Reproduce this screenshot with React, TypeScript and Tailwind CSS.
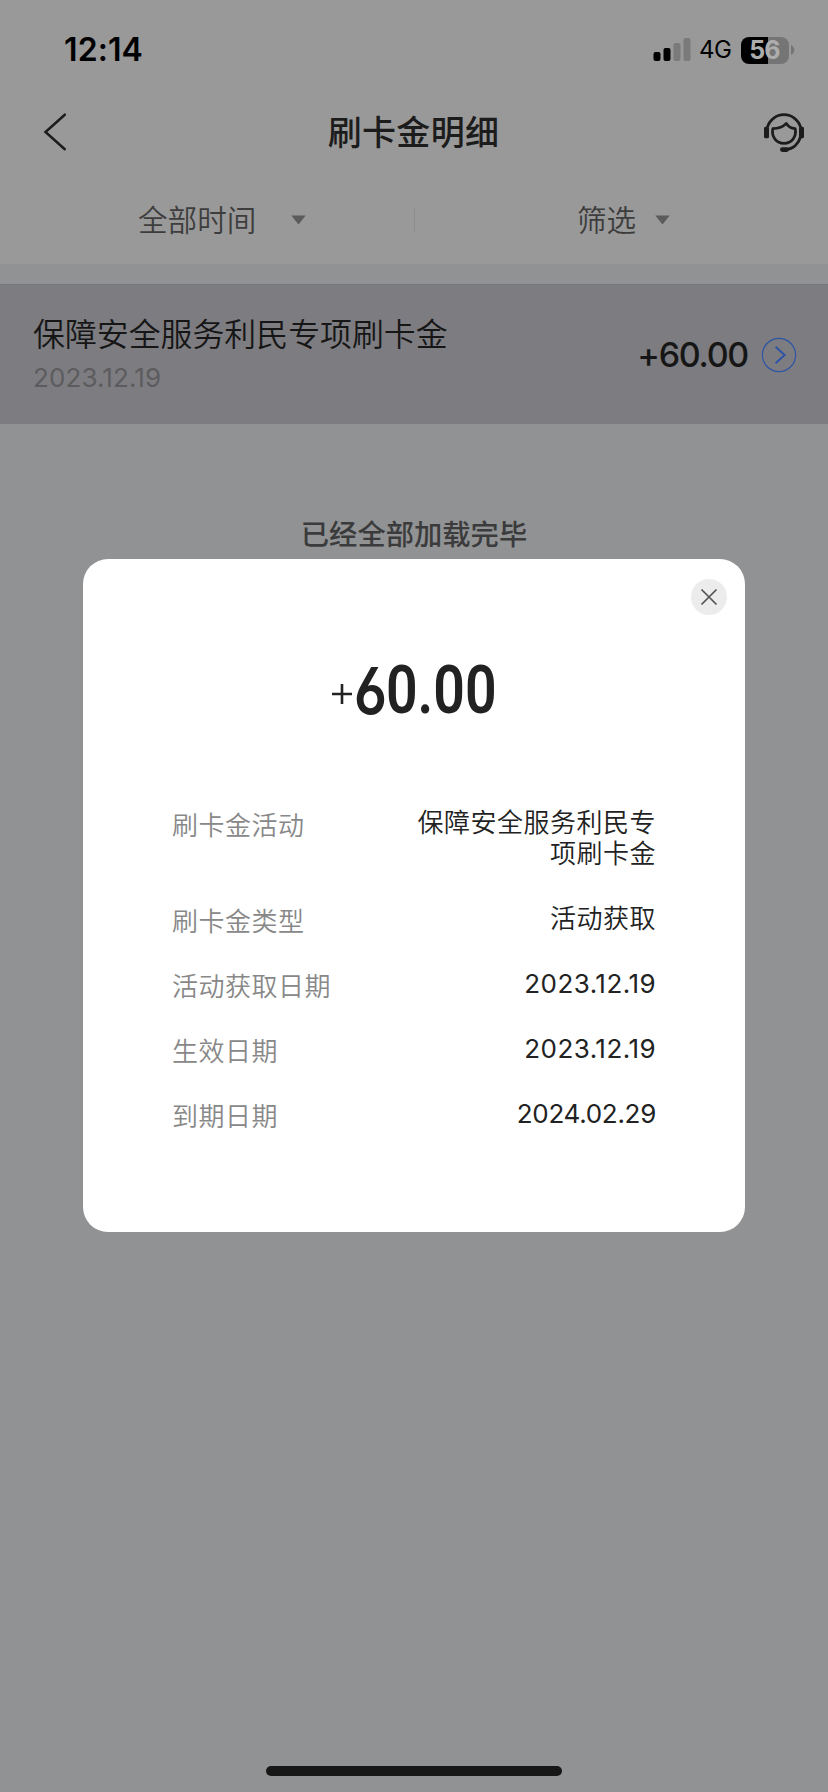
import React from "react";

type Detail = { label: string; value: string; tone: string };

const details: Detail[] = [
  { label: "刷卡金活动", value: "保障安全服务利民专项刷卡金", tone: "font-[350] tracking-[0.5px]" },
  { label: "刷卡金类型", value: "活动获取", tone: "font-[350] tracking-[0.5px]" },
  { label: "活动获取日期", value: "2023.12.19", tone: "font-[380] tracking-[0.45px]" },
  { label: "生效日期", value: "2023.12.19", tone: "font-[380] tracking-[0.45px]" },
  { label: "到期日期", value: "2024.02.29", tone: "font-[380] tracking-[-0.3px]" },
];

function StatusBar() {
  return (
    <div className="flex h-[92px] items-start justify-between pl-[64px] pr-[33px] pt-[30px]">
      <span className="h-[40px] text-[32px] font-semibold leading-[40px] tracking-[0.1px] text-black">12:14</span>
      <div className="flex h-[40px] items-center">
        <svg width="38" height="40" viewBox="0 0 38 40">
          <rect x="0.5" y="22" width="7" height="9" rx="2" fill="#000" />
          <rect x="10.5" y="18" width="7" height="13" rx="2" fill="#000" />
          <rect x="20.5" y="13" width="7" height="18" rx="2" fill="#7a7a7a" />
          <rect x="30.5" y="8" width="7" height="23" rx="2" fill="#7a7a7a" />
        </svg>
        <span className="ml-[8px] w-[33px] text-[24px] leading-[40px] tracking-[-0.5px] text-black">4G</span>
        <div className="ml-[9px] flex h-[27px] w-[48px] items-center justify-center rounded-[8px] bg-linear-to-r from-black from-[56%] to-[#757575] to-[56%]">
          <span className="h-[32px] pr-[1px] text-[25px] font-bold leading-[32px] tracking-[-0.8px] text-[#adadad]">56</span>
        </div>
        <svg className="ml-[2px]" width="4" height="10" viewBox="0 0 4 10">
          <path d="M0 0C2 1 3.3 3 3.3 5S2 9 0 10Z" fill="#757575" />
        </svg>
      </div>
    </div>
  );
}

function HeadsetIcon() {
  return (
    <svg width="44" height="44" viewBox="0 0 44 44" fill="none" stroke="#1c1c1c" strokeWidth="2.8">
      <path d="M5.3 17.5A17.3 17.3 0 0 1 38.7 17.5" />
      <path d="M38.7 26.5C36.5 34 31 39 24 39.3" />
      <rect x="2" y="16.8" width="5" height="11.4" rx="1.5" fill="#1c1c1c" stroke="none" />
      <rect x="37" y="16.8" width="5" height="11.4" rx="1.5" fill="#1c1c1c" stroke="none" />
      <rect x="18" y="37.2" width="9" height="4.8" rx="2.4" fill="#1c1c1c" stroke="none" />
      <path d="M10.8 18.6C16 18.6 21 17 24.3 13.4C26 16.6 28.8 18.4 33.2 18.6C34.8 27 29.6 33.4 22 33.4S9.2 27 10.8 18.6Z" strokeLinejoin="round" strokeWidth="2.7" />
    </svg>
  );
}

function Header() {
  return (
    <header className="flex h-[80px] items-center justify-between pl-[42px] pr-[22px]">
      <svg width="44" height="44" viewBox="0 0 44 44" fill="none" stroke="#1c1c1c" strokeWidth="2.5" strokeLinecap="round">
        <path d="M22.8 4.7L3.5 22L22.8 39.2" />
      </svg>
      <h1 className="ml-[-21px] pt-[2px] text-[34px] font-medium leading-[44px] tracking-[0.3px] text-[#1c1c1c]">刷卡金明细</h1>
      <HeadsetIcon />
    </header>
  );
}

function Triangle() {
  return (
    <svg width="15" height="10" viewBox="0 0 15 10">
      <path d="M0.3 0.5H14.7L7.5 9.5Z" fill="#5b5b5b" />
    </svg>
  );
}

function Filters() {
  return (
    <div className="flex h-[92px] items-center pt-[3px] text-[29.6px] font-[350] leading-[40px] text-[#3d3d3d]">
      <div className="flex w-[414px] items-center pl-[138px]">
        <span className="w-[153px] pt-px">全部时间</span>
        <Triangle />
      </div>
      <div className="h-[24px] w-px bg-[#8b8b8b]" />
      <div className="flex items-center pl-[162px]">
        <span className="w-[78px] pt-px">筛选</span>
        <Triangle />
      </div>
    </div>
  );
}

function Entry() {
  return (
    <div className="flex h-[140px] items-center justify-between border-t border-[#767679] bg-[#7d7c80] pl-[33px] pr-[31px]">
      <div>
        <div className="text-[31.9px] font-[350] leading-[46px] text-[#161616]">保障安全服务利民专项刷卡金</div>
        <div className="text-[26px] leading-[40px] tracking-[0.1px] text-[#5c5c5e]">2023.12.19</div>
      </div>
      <div className="flex items-center">
        <span className="text-[34px] font-medium leading-[40px] tracking-[-1.3px] text-[#161616]">+60.00</span>
        <svg className="ml-[13px]" width="36" height="36" viewBox="0 0 36 36" fill="none" stroke="#2d54a6">
          <circle cx="18" cy="18" r="16.6" strokeWidth="1.2" />
          <path d="M14.6 9.8L23.6 18L14.6 26.2" strokeWidth="2" />
        </svg>
      </div>
    </div>
  );
}

function DetailDialog() {
  return (
    <div role="dialog" className="absolute left-[83px] top-[559px] flex h-[673px] w-[662px] flex-col rounded-[25px] bg-white pl-[89px] pr-[89px]">
      <button className="absolute right-[18px] top-[20px] flex h-[36px] w-[36px] items-center justify-center rounded-full bg-[#ececec]">
        <svg width="18" height="18" viewBox="0 0 18 18" stroke="#555" strokeWidth="1.7">
          <path d="M1.5 1.5L16.5 16.5M16.5 1.5L1.5 16.5" />
        </svg>
      </button>
      <div className="mt-[92px] flex h-[80px] items-center pl-[159px] text-[#222]">
        <svg width="22" height="22" viewBox="0 0 22 22" className="mt-[6px]" stroke="#222" strokeWidth="2.6">
          <path d="M1 11H21M11 1V21" />
        </svg>
        <span className="ml-[1px] flex origin-left scale-x-[0.84] leading-[80px]">
          <span className="w-[38px] text-[65px] font-semibold [font-feature-settings:'ss01','cv03']">6</span>
          <span className="text-[66px] font-semibold [font-family:Roboto]">0.00</span>
        </span>
      </div>
      <dl className="mt-[76px] flex flex-col gap-[34px] text-[26px] leading-[31px]">
        {details.map((d) => (
          <div key={d.label} className="flex justify-between">
            <dt className="h-[31px] whitespace-nowrap pt-[3px] font-[350] tracking-[0.5px] text-[#888]">{d.label}</dt>
            <dd className={`w-[243px] text-right text-[#222] ${d.tone}`}>{d.value}</dd>
          </div>
        ))}
      </dl>
    </div>
  );
}

export default function App() {
  return (
    <div className="relative flex h-[1792px] w-[828px] flex-col overflow-hidden bg-[#919294] [font-family:Inter,'Noto_Sans_CJK_SC',sans-serif]">
      <div className="bg-[#999]">
        <StatusBar />
        <Header />
        <Filters />
      </div>
      <main className="flex flex-1 flex-col pt-[20px]">
        <Entry />
        <p className="mt-[91px] text-center text-[28.3px] font-medium leading-[40px] text-[#3b3b3c]">已经全部加载完毕</p>
      </main>
      <div className="mb-[16px] h-[10px] w-[296px] self-center rounded-full bg-[#171717]" />
      <DetailDialog />
    </div>
  );
}
